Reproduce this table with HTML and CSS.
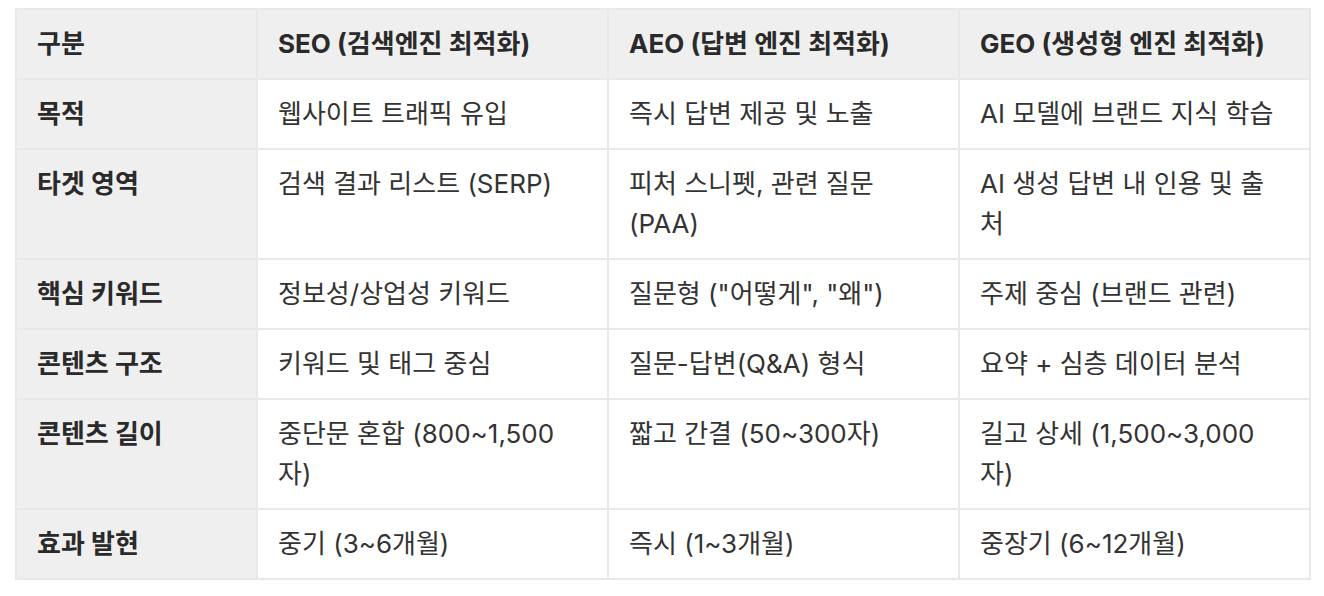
FILE: index.html
```html
<!DOCTYPE html>
<html lang="ko">
<head>
<meta charset="utf-8">
<link rel="stylesheet" href="styles.css">
</head>
<body>
<div class="wrap">
<table class="cmp">
  <colgroup>
    <col class="c1"><col class="c2"><col class="c3"><col class="c4">
  </colgroup>
  <thead>
    <tr><th>구분</th><th>SEO (검색엔진 최적화)</th><th>AEO (답변 엔진 최적화)</th><th>GEO (생성형 엔진 최적화)</th></tr>
  </thead>
  <tbody>
    <tr><th>목적</th><td>웹사이트 트래픽 유입</td><td>즉시 답변 제공 및 노출</td><td>AI 모델에 브랜드 지식 학습</td></tr>
    <tr><th>타겟 영역</th><td>검색 결과 리스트 (SERP)</td><td>피처 스니펫, 관련 질문 (PAA)</td><td>AI 생성 답변 내 인용 및 출처</td></tr>
    <tr><th>핵심 키워드</th><td>정보성/상업성 키워드</td><td>질문형 ("어떻게", "왜")</td><td>주제 중심 (브랜드 관련)</td></tr>
    <tr><th>콘텐츠 구조</th><td>키워드 및 태그 중심</td><td>질문-답변(Q&amp;A) 형식</td><td>요약 + 심층 데이터 분석</td></tr>
    <tr><th>콘텐츠 길이</th><td>중단문 혼합 (800~1,500자)</td><td>짧고 간결 (50~300자)</td><td>길고 상세 (1,500~3,000자)</td></tr>
    <tr><th>효과 발현</th><td>중기 (3~6개월)</td><td>즉시 (1~3개월)</td><td>중장기 (6~12개월)</td></tr>
  </tbody>
</table>
</div>
</body>
</html>
```

FILE: styles.css
```css
html, body {
  margin: 0;
  padding: 0;
  background: #ffffff;
}
body {
  font-family: "Inter", "Noto Sans CJK KR", sans-serif;
  color: #333333;
}
.wrap {
  padding: 8px 14px 0 15px;
}
.cmp {
  border-collapse: collapse;
  table-layout: fixed;
  width: 1294px;
  font-size: 26px;
  line-height: 40px;
}
.c1 { width: 241px; }
.c2 { width: 351px; }
.c3 { width: 351px; }
.c4 { width: 351px; }
.cmp th, .cmp td {
  border: 2px solid #e8e8e8;
  padding: 14px 25px 14px 20px;
  text-align: left;
  vertical-align: top;
  word-break: normal;
  overflow-wrap: break-word;
}
.cmp th {
  background: #efefef;
  font-weight: 700;
  color: #2a2a2a;
}
.cmp td {
  font-weight: 400;
  background: #ffffff;
}
.cmp thead th {
  background: #efefef;
}
```
